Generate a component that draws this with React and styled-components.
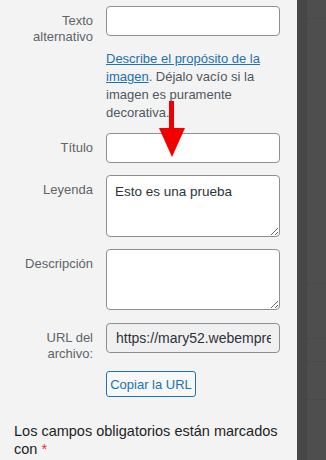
import React from "react";
import styled, { createGlobalStyle } from "styled-components";

const Global = createGlobalStyle`
  html, body { margin: 0; padding: 0; }
  body { background: #f3f3f3; font-family: "Liberation Sans", Arial, sans-serif; }
`;

const Page = styled.div`
  display: flex;
  width: 326px;
  height: 460px;
  overflow: hidden;
`;

const Panel = styled.div`
  position: relative;
  width: 297px;
  flex: none;
  background: #f3f3f3;
  padding-top: 6px;
  box-sizing: border-box;
`;

const Strip = styled.div`
  flex: 1;
  display: flex;
  background: #494949;
`;

const StripEdge = styled.div`
  width: 9px;
  background: #474747;
  border-right: 1px solid #424242;
`;

const StripBody = styled.div`
  flex: 1;
  background: #4e4e4e;
  display: flex;
  flex-direction: column;
`;

const StripBlock = styled.div`
  height: ${(p) => p.h}px;
  border-bottom: 1px solid ${(p) => (p.line ? "#4a4a4a" : "transparent")};
`;

const Row = styled.div`
  display: grid;
  grid-template-columns: 93px 174px;
  column-gap: 13px;
  margin-bottom: ${(p) => p.mb ?? 12}px;
`;

const Label = styled.label`
  text-align: right;
  font-size: 13px;
  line-height: 16px;
  color: #5f646a;
  padding-top: ${(p) => p.pt ?? 7}px;
`;

const Field = styled.div`
  display: flex;
  flex-direction: column;
`;

const Input = styled.input`
  box-sizing: border-box;
  width: 174px;
  height: 30px;
  margin: 0;
  border: 1px solid #8c8f94;
  border-radius: 4px;
  background: ${(p) => (p.readOnly ? "#f0f0f1" : "#fff")};
  padding: 0 8px 0 9px;
  font-family: "Liberation Sans", Arial, sans-serif;
  font-size: 14px;
  color: #2c3338;
  outline: none;
`;

const Area = styled.textarea`
  box-sizing: border-box;
  width: 174px;
  height: ${(p) => p.h}px;
  margin: 0;
  border: 1px solid #8c8f94;
  border-radius: 4px;
  background: #fff;
  padding: 7px 8px;
  font-family: "Liberation Sans", Arial, sans-serif;
  font-size: 13.5px;
  line-height: 18px;
  color: #2c3338;
  resize: vertical;
  outline: none;
  display: block;
`;

const Help = styled.p`
  margin: 14px 0 0;
  font-size: 13px;
  line-height: 18px;
  color: #50575e;
`;

const Link = styled.a`
  color: #2271b1;
  text-decoration: underline;
`;

const Button = styled.button`
  box-sizing: border-box;
  height: 26px;
  width: 90px;
  margin: 0;
  padding: 0;
  border: 1px solid #2271b1;
  border-radius: 3px;
  background: #f6f7f7;
  color: #2271b1;
  font-family: "Liberation Sans", Arial, sans-serif;
  font-size: 13px;
`;

const Required = styled.p`
  margin: 25px 0 0 14px;
  width: 270px;
  font-size: 14.5px;
  line-height: 18px;
  color: #1d2327;
`;

const Star = styled.span`
  color: #d63638;
`;

const Arrow = styled.svg`
  position: absolute;
  left: 158px;
  top: 101px;
`;

export default function App() {
  return (
    <>
      <Global />
      <Page>
        <Panel>
          <Row mb={11}>
            <Label>Texto alternativo</Label>
            <Field>
              <Input type="text" />
              <Help>
                <Link href="#">Describe el propósito de la imagen</Link>. Déjalo vacío si la imagen es puramente decorativa.
              </Help>
            </Field>
          </Row>
          <Row>
            <Label>Título</Label>
            <Field>
              <Input type="text" />
            </Field>
          </Row>
          <Row>
            <Label>Leyenda</Label>
            <Field>
              <Area h={62} defaultValue="Esto es una prueba" />
            </Field>
          </Row>
          <Row mb={13}>
            <Label>Descripción</Label>
            <Field>
              <Area h={61} />
            </Field>
          </Row>
          <Row mb={9}>
            <Label>URL del archivo:</Label>
            <Field>
              <Input type="text" readOnly value="https://mary52.webempresa.eu/wp-content/uploads/imagen.jpg" />
            </Field>
          </Row>
          <Row mb={0}>
            <span />
            <Field>
              <Button>Copiar la URL</Button>
            </Field>
          </Row>
          <Required>
            Los campos obligatorios están marcados con <Star>*</Star>
          </Required>
          <Arrow width="28" height="57" viewBox="0 0 28 57">
            <rect x="11" y="0" width="5" height="29" fill="#f20000" />
            <polygon points="1,27 27,27 14,56" fill="#f20000" />
          </Arrow>
        </Panel>
        <Strip>
          <StripEdge />
          <StripBody>
            <StripBlock h={18} line />
            <StripBlock h={264} line />
            <StripBlock h={54} line />
            <StripBlock h={22} line />
            <StripBlock h={37} line />
          </StripBody>
        </Strip>
      </Page>
    </>
  );
}
